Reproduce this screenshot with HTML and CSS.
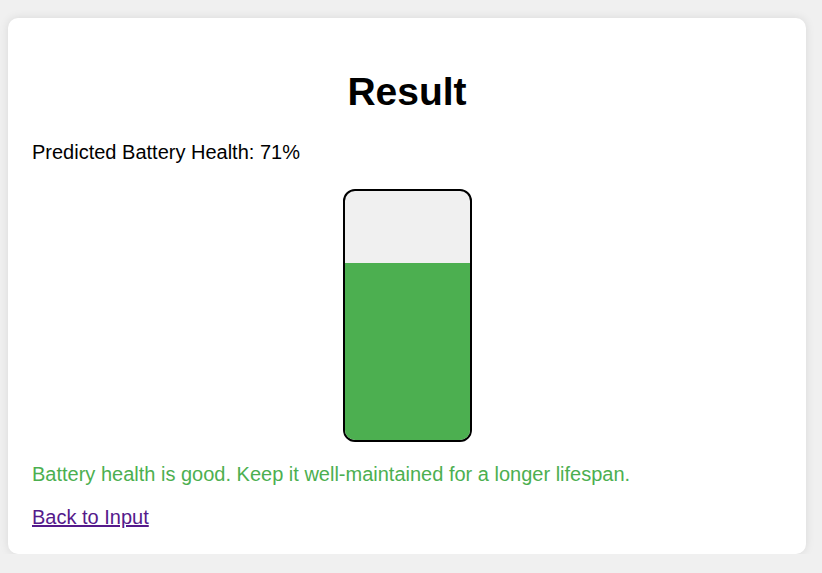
FILE: index.html
```html
<!DOCTYPE html>
<html lang="en">
<head>
<meta charset="utf-8">
<title>Result</title>
<link rel="stylesheet" href="styles.css">
</head>
<body>
<div class="card">
  <h1 class="title">Result</h1>
  <p class="prediction">Predicted Battery Health: 71%</p>
  <div class="battery-wrap">
    <div class="battery">
      <div class="battery-level" style="height: 71%;"></div>
    </div>
  </div>
  <p class="message">Battery health is good. Keep it well-maintained for a longer lifespan.</p>
  <p class="back"><a class="back-link" href="#">Back to Input</a></p>
</div>
</body>
</html>
```

FILE: styles.css
```css
html {
  background: #f0f0f0;
}

body {
  margin: 0;
  padding: 18px 0 0 8px;
  font-family: "Liberation Sans", Arial, sans-serif;
  font-size: 20px;
  color: #000;
}

.card {
  box-sizing: border-box;
  width: 798px;
  background: #fff;
  border-radius: 10px;
  box-shadow: 0 0 10px rgba(0, 0, 0, 0.1);
  padding: 24px 24px 24px 24px;
}

.title {
  margin: 28px 0 27px;
  font-size: 39px;
  font-weight: bold;
  text-align: center;
}

.prediction {
  margin: 0 0 25px;
}

.battery-wrap {
  display: flex;
  justify-content: center;
  margin-bottom: 21px;
}

.battery {
  width: 125px;
  height: 249px;
  border: 2px solid #000;
  border-radius: 12px;
  background: #f0f0f0;
  overflow: hidden;
  display: flex;
  flex-direction: column;
  justify-content: flex-end;
}

.battery-level {
  background: #4caf50;
}

.message {
  margin: 0 0 20px;
  color: #4caf50;
}

.back {
  margin: 0 0 1px;
}

.back-link {
  color: #551a8b;
}
```
